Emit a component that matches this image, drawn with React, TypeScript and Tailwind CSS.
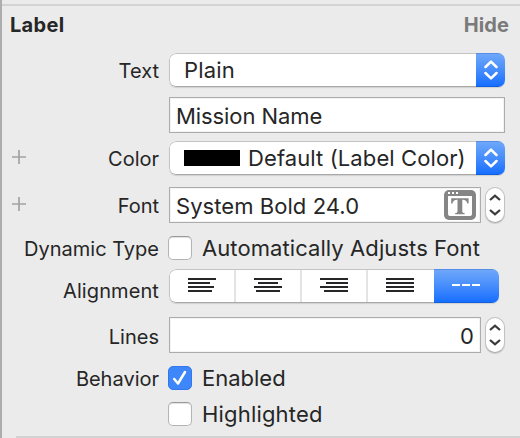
import type { ReactNode } from "react";

function Row({ label, className, labelClass = "pt-[2px]", addable = false, children }: {
  label?: string; className: string; labelClass?: string; addable?: boolean; children: ReactNode;
}) {
  return (
    <div className={`flex items-center ${className}`}>
      <div className="flex w-[26px] shrink-0 justify-end">
        {addable && (
          <svg width="14" height="14" viewBox="0 0 14 14" className="mr-[2px] mb-[2px]" stroke="#a3a3a3" strokeWidth="1.7">
            <path d="M7 0V14M0 7H14" />
          </svg>
        )}
      </div>
      <div className={`mr-px w-[131px] shrink-0 text-[20px] leading-6 whitespace-nowrap ${labelClass}`}>
        <div className="flex justify-end">{label}</div>
      </div>
      {children}
    </div>
  );
}

function PopUp({ children }: { children: ReactNode }) {
  return (
    <div className="ml-[9px] flex h-[34px] w-[336px] overflow-hidden rounded-[7px] bg-white shadow-[0_1px_1px_rgba(0,0,0,0.12)]">
      <div className="flex flex-1 items-center rounded-l-[7px] border border-r-0 border-[#c4c4c4] border-b-[#a8a8a8] pl-[14px]">{children}</div>
      <div className="flex w-[29px] items-center justify-center border-t border-b border-t-[#568de8] border-b-[#1260e0] bg-linear-to-b from-[#6ea7f9] to-[#146eff]">
        <svg width="14" height="20" viewBox="0 0 14 20" fill="none" stroke="white" strokeWidth="2.5" strokeLinecap="round" strokeLinejoin="round">
          <path d="M1.5 7L7 1.6L12.5 7M1.5 13L7 18.4L12.5 13" />
        </svg>
      </div>
    </div>
  );
}

function Field({ className, children }: { className: string; children: ReactNode }) {
  return (
    <div className={`ml-[9px] flex h-9 items-center border border-[#acacac] bg-white shadow-[inset_0_0_0_1px_#f3f3f3] ${className}`}>
      {children}
    </div>
  );
}

function Stepper() {
  return (
    <div className="ml-1 flex h-[36px] w-5 items-center justify-center rounded-full border border-[#c2c2c2] border-b-[#aaaaaa] bg-white shadow-[0_1px_1px_rgba(0,0,0,0.15)]">
      <svg width="12" height="22" viewBox="0 0 12 22" fill="none" stroke="#3b3b3b" strokeWidth="2.3">
        <path d="M1 6L6 1.7L11 6M1 16L6 20.3L11 16" />
      </svg>
    </div>
  );
}

function Check({ on = false }: { on?: boolean }) {
  return on ? (
    <div className="ml-2 flex size-6 shrink-0 items-center justify-center rounded-[5px] border border-[#3277ee] bg-[#3e87fa]">
      <svg width="16" height="16" viewBox="0 0 16 16" fill="none" stroke="white" strokeWidth="2.5" strokeLinecap="round" strokeLinejoin="round">
        <path d="M2.2 9L6 13.5L13 2" />
      </svg>
    </div>
  ) : (
    <div className="ml-2 size-6 shrink-0 rounded-[5px] border border-[#b4b4b4] border-t-[#999999] bg-white shadow-[inset_0_1px_1px_rgba(0,0,0,0.12)]" />
  );
}

function Lines({ d }: { d: string }) {
  return (
    <svg width="28" height="14" viewBox="0 0 28 14" stroke="#262628" strokeWidth="2" className="mb-[2px]" shapeRendering="crispEdges">
      <path d={d} />
    </svg>
  );
}

const value = "whitespace-nowrap text-[22px] leading-7";

export default function App() {
  return (
    <div className="flex h-[438px] w-[520px] flex-col overflow-hidden border-l-2 border-[#adadad] bg-[#ebebeb] pt-1 text-[#262626] [font-family:Inter,'Liberation_Sans',sans-serif]">
      <div className="h-[2px] shrink-0 bg-[#d3d3d3]" />
      <div className="flex h-[47px] shrink-0 items-start justify-between pt-[7px] pr-[11px] pl-[8px] text-[20px] leading-6">
        <span className="font-bold tracking-[0.3px]">Label</span>
        <span className="font-bold tracking-[0.1px] text-[#7a7a7a]">Hide</span>
      </div>
      <Row label="Text" className="h-[34px]">
        <PopUp><span className={`tracking-[0.2px] ${value}`}>Plain</span></PopUp>
      </Row>
      <Row className="mt-[10px] h-9">
        <Field className="w-[336px] pl-[6px]"><span className={`pt-[2px] tracking-[-0.08px] ${value}`}>Mission Name</span></Field>
      </Row>
      <Row label="Color" addable className="mt-2 h-[34px]">
        <PopUp>
          <span className="h-4 w-14 bg-black" />
          <span className={`ml-2 tracking-[0.1px] ${value}`}>Default (Label Color)</span>
        </PopUp>
      </Row>
      <Row label="Font" addable className="mt-3 h-9">
        <Field className="w-[312px] justify-between pr-1 pl-[6px]">
          <span className={`pt-[2px] tracking-[0.06px] ${value}`}>System Bold 24.0</span>
          <svg width="32" height="30" viewBox="0 0 32 30">
            <rect width="32" height="30" rx="5" fill="#858585" />
            <path d="M4 6H28V24Q28 26 26 26H6Q4 26 4 24Z" fill="white" />
            <path d="M4 2H6V4H4ZM8 2H10V4H8ZM12 2H14V4H12Z" fill="white" />
            <path d="M7.2 8.3H24.6V13.4H23.3Q22.5 9.8 19 9.8H18.3V21.5Q18.3 23.2 20.7 23.2V24.3H11.1V23.2Q13.5 23.2 13.5 21.5V9.8H12.8Q9.3 9.8 8.5 13.4H7.2Z" fill="#858585" />
          </svg>
        </Field>
        <Stepper />
      </Row>
      <Row label="Dynamic Type" className="mt-[13px] h-6">
        <Check /><span className={`ml-[10px] tracking-[0.08px] ${value}`}>Automatically Adjusts Font</span>
      </Row>
      <Row label="Alignment" labelClass="pt-[10px] tracking-[0.1px]" className="mt-[9px] h-[34px]">
        <div className="ml-[9px] flex h-[34px] w-[330px] overflow-hidden rounded-[7px] bg-white shadow-[0_1px_1px_rgba(0,0,0,0.12)]">
          <div className="flex w-[265px] rounded-l-[7px] border border-r-0 border-[#c4c4c4] border-b-[#a8a8a8]">
            <div className="flex w-[66px] items-center border-r-2 border-[#e4e4e4] pl-[18px]"><Lines d="M0 1H28M0 5H22M0 9H26M0 13H24" /></div>
            <div className="flex w-[66px] items-center border-r-2 border-[#e4e4e4] pl-[18px]"><Lines d="M0 1H28M4 5H24M0 9H28M2 13H26" /></div>
            <div className="flex w-[66px] items-center border-r-2 border-[#e4e4e4] pl-[18px]"><Lines d="M0 1H28M6 5H28M0 9H28M4 13H28" /></div>
            <div className="flex flex-1 items-center pl-[18px]"><Lines d="M0 1H28M0 5H28M0 9H28M0 13H28" /></div>
          </div>
          <div className="flex flex-1 items-center gap-[2px] border-t border-b border-t-[#568de8] border-b-[#1260e0] bg-linear-to-b from-[#6ea7f9] to-[#146eff] pb-[2px] pl-[18px]">
            <span className="h-[2px] w-2 bg-white" /><span className="h-[2px] w-2 bg-white" /><span className="h-[2px] w-2 bg-white" />
          </div>
        </div>
      </Row>
      <Row label="Lines" labelClass="pt-[4px]" className="mt-[14px] h-9">
        <Field className="w-[312px] justify-end pr-[6px]"><span className={`pt-[2px] ${value}`}>0</span></Field>
        <Stepper />
      </Row>
      <Row label="Behavior" className="mt-[13px] h-6">
        <Check on /><span className={`ml-[10px] ${value}`}>Enabled</span>
      </Row>
      <Row className="mt-3 h-6">
        <Check /><span className={`ml-[10px] tracking-[0.18px] ${value}`}>Highlighted</span>
      </Row>
      <div className="mt-[10px] ml-[14px] h-[2px] shrink-0 bg-[#d3d3d3]" />
    </div>
  );
}
